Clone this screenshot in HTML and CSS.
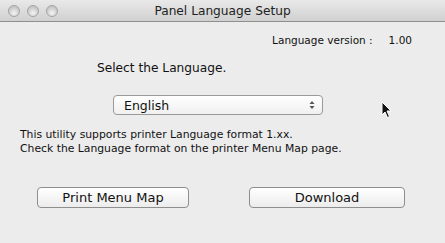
FILE: index.html
```html
<!DOCTYPE html>
<html lang="en">
<head>
  <meta charset="UTF-8" />
  <title>Panel Language Setup</title>
  <link rel="stylesheet" href="styles.css">
</head>
<body>
  <div class="window">
    <header class="titlebar">
      <div class="lights">
        <span class="light"></span>
        <span class="light"></span>
        <span class="light"></span>
      </div>
      <div class="title">Panel Language Setup</div>
      <div></div>
    </header>

    <main class="content">
      <div class="version-row">
        <span>Language version :</span>
        <span class="version">1.00</span>
      </div>

      <div class="prompt">Select the Language.</div>

      <div class="select">
        <span>English</span>
        <svg class="arrows" width="6" height="10" viewBox="0 0 6 10">
          <path d="M0.5 4 L3 1 L5.5 4 Z" fill="#555"/>
          <path d="M0.5 6 L3 9 L5.5 6 Z" fill="#555"/>
        </svg>
      </div>

      <p class="note">
        This utility supports printer Language format 1.xx.<br>
        Check the Language format on the printer Menu Map page.
      </p>

      <div class="buttons">
        <button class="btn btn-print">Print Menu Map</button>
        <button class="btn btn-download">Download</button>
      </div>
    </main>

    <!-- mouse pointer in the shot -->
    <svg class="cursor" width="12" height="18" viewBox="0 0 12 18">
      <path d="M1 1 L1 14 L4 11 L6.5 16.5 L8.5 15.5 L6 10 L10 10 Z" fill="#111" stroke="#fff" stroke-width="1"/>
    </svg>
  </div>
</body>
</html>
```

FILE: styles.css
```css
body {
  margin: 0;
  font-family: "DejaVu Sans", "Noto Sans", sans-serif;
  color: #111;
  background: #ececec;
}

.window {
  position: relative;
  width: 445px;
  height: 243px;
  overflow: hidden;
  background: #ececec;
}

.titlebar {
  display: grid;
  grid-template-columns: 1fr auto 1fr;
  align-items: center;
  height: 21px;
  background: linear-gradient(#e9e9e9, #d0d0d0);
  border-bottom: 1px solid #8f8f8f;
}

.lights {
  display: flex;
  gap: 7px;
  padding-left: 8px;
}

.light {
  width: 12px;
  height: 12px;
  border-radius: 50%;
  box-sizing: border-box;
  border: 1px solid #a4a4a4;
  background: radial-gradient(circle at 50% 70%, #f4f4f4, #c6c6c6 70%);
}

.title {
  font-size: 12.2px;
  color: #222;
}

.content {
  padding: 12px 0 0 0;
}

.version-row {
  display: flex;
  justify-content: flex-end;
  gap: 16px;
  padding-right: 33px;
  font-size: 10.5px;
}

.prompt {
  margin-top: 15px;
  padding-left: 97px;
  font-size: 12.2px;
}

.select {
  display: flex;
  align-items: center;
  justify-content: space-between;
  box-sizing: border-box;
  width: 210px;
  height: 20px;
  margin: 20px 0 0 113px;
  padding: 0 7px 0 10px;
  border: 1px solid #9a9a9a;
  border-radius: 4px;
  background: linear-gradient(#ffffff, #f0f0f0);
  font-size: 12.5px;
}

.note {
  margin: 13px 0 0 20px;
  font-size: 10.8px;
  line-height: 14px;
}

.buttons {
  display: flex;
  margin-top: 31px;
  padding-left: 37px;
  gap: 60px;
}

.btn {
  box-sizing: border-box;
  height: 21px;
  padding: 0;
  border: 1px solid #8e8e8e;
  border-radius: 4px;
  background: linear-gradient(#ffffff, #ececec);
  font-family: "DejaVu Sans", "Noto Sans", sans-serif;
  font-size: 13px;
  color: #111;
}

.btn-print {
  width: 152px;
}

.btn-download {
  width: 156px;
}

.cursor {
  position: absolute;
  left: 381px;
  top: 101px;
}
```
